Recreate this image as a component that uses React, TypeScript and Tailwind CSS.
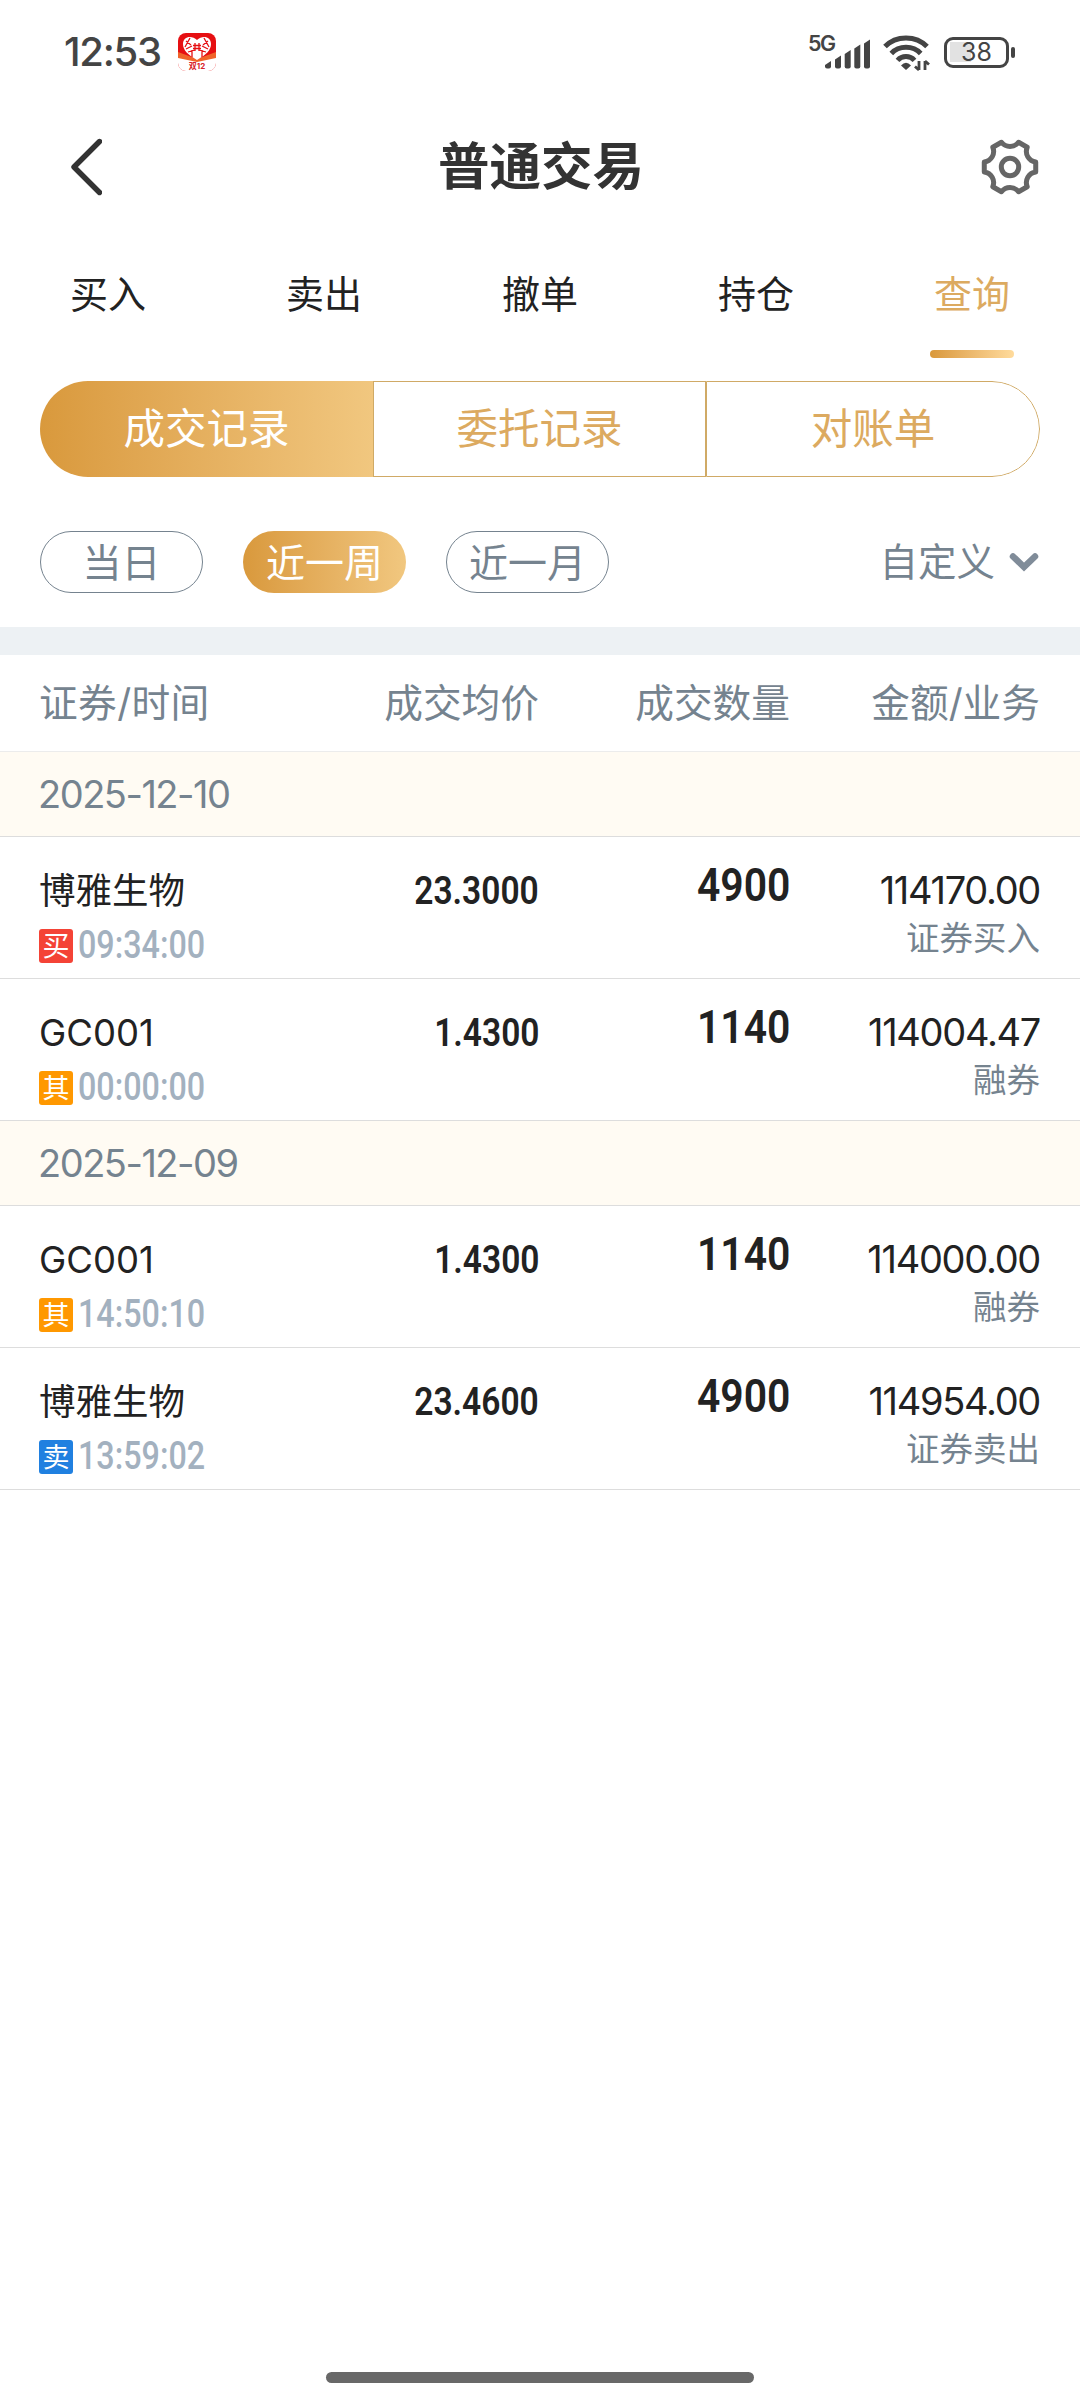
import { clsx } from "clsx";

type Side = "buy" | "sell" | "other";

interface Trade {
  name: string;
  side: Side;
  time: string;
  price: string;
  qty: string;
  amount: string;
  kind: string;
}

const TABS = ["买入", "卖出", "撤单", "持仓", "查询"];
const SEGMENTS = ["成交记录", "委托记录", "对账单"];
const RANGES = ["当日", "近一周", "近一月"];

const DAYS: { date: string; trades: Trade[] }[] = [
  {
    date: "2025-12-10",
    trades: [
      { name: "博雅生物", side: "buy", time: "09:34:00", price: "23.3000", qty: "4900", amount: "114170.00", kind: "证券买入" },
      { name: "GC001", side: "other", time: "00:00:00", price: "1.4300", qty: "1140", amount: "114004.47", kind: "融券" },
    ],
  },
  {
    date: "2025-12-09",
    trades: [
      { name: "GC001", side: "other", time: "14:50:10", price: "1.4300", qty: "1140", amount: "114000.00", kind: "融券" },
      { name: "博雅生物", side: "sell", time: "13:59:02", price: "23.4600", qty: "4900", amount: "114954.00", kind: "证券卖出" },
    ],
  },
];

const BADGES: Record<Side, { label: string; color: string }> = {
  buy: { label: "买", color: "bg-[#f44336]" },
  sell: { label: "卖", color: "bg-[#2080e0]" },
  other: { label: "其", color: "bg-[#ff9800]" },
};

// Six-tooth cog outline around the origin
function cogPath() {
  const at = (deg: number, r: number) => {
    const rad = (deg * Math.PI) / 180;
    return `${(Math.cos(rad) * r).toFixed(2)} ${(Math.sin(rad) * r).toFixed(2)}`;
  };
  let d = `M${at(-11, 26.2)}`;
  for (let a = 0; a < 360; a += 60) {
    d += `L${at(a + 11, 26.2)}C${at(a + 18, 19.6)} ${at(a + 42, 19.6)} ${at(a + 49, 26.2)}`;
  }
  return d + "Z";
}

function StatusBar() {
  return (
    <div className="flex h-[104px] items-center pl-[64px] pr-[65px] text-[#444]">
      <span className="w-[114px] whitespace-nowrap font-['Inter','Noto_Sans_CJK_SC',sans-serif] text-[40px] font-medium leading-[50px] tracking-[-1.300px]">
        12:53
      </span>
      <svg className="h-[38px] w-[38px]" viewBox="0 0 38 38">
        <rect width="38" height="38" rx="8" fill="#e60f12" />
        <path d="M0 19 19 26 38 19V30H0Z" fill="#f0642a" />
        <path d="M0 25 19 29 38 25V30A8 8 0 0 1 30 38H8A8 8 0 0 1 0 30Z" fill="#fff" />
        <path d="M19 27C10 22 5 17 5 11 5 3 14 2 19 7 24 2 33 3 33 11 33 17 28 22 19 27Z" fill="#fff" />
        <path
          d="M8 8l5 4M12 5l-5 9M8 16l6-3M14 17v7M10 19l7-2M30 8l-5 4M26 5l5 9M30 16l-6-3M24 17v7M28 19l-7-2M17 10v8M21 10v8M15 12.500h8M15 15.500h8"
          stroke="#e60f12"
          strokeWidth="1.300"
          fill="none"
        />
        <text x="19" y="36" textAnchor="middle" fontSize="8" fontWeight="700" fill="#d8232a" fontFamily="Inter, 'Noto Sans CJK SC', sans-serif">
          双12
        </text>
      </svg>
      <div className="ml-auto flex items-center">
        <svg className="h-[44px] w-[66px]" viewBox="-2 -4 66 44" fill="#444">
          <text x="0" y="16.500" fontSize="21.500" fontWeight="600" textLength="28" fontFamily="Inter, sans-serif">
            5G
          </text>
          <path d="M17 31l6-4v5.500q0 2-2 2h-2q-2 0-2-2Z" />
          <path d="M27 25.500l6-4v11q0 2-2 2h-2q-2 0-2-2Z" />
          <path d="M36.700 20l6-4v16.500q0 2-2 2h-2q-2 0-2-2Z" />
          <path d="M46.300 14.500l6-4v22q0 2-2 2h-2q-2 0-2-2Z" />
          <path d="M56 9.500l6-4v27q0 2-2 2h-2q-2 0-2-2Z" />
        </svg>
        <svg className="ml-[10px] h-[38px] w-[48px]" viewBox="0 0 48 38" fill="none" stroke="#444" strokeWidth="5">
          <path d="M3 13.500C14 2 34 2 45 13.500" />
          <path d="M9.300 20.500C17 12.300 31 12.300 38.700 20.500" />
          <path d="M15.500 27.300C20 22.300 28 22.300 32.500 27.300" />
          <path d="M19 32.500Q24 27 29 32.500L24 37Z" fill="#444" stroke="none" />
          <path d="M37 28v9M43 28v9M37 37l-4-3.500M43 28l4 3.500" strokeWidth="2.800" />
        </svg>
        <div className="ml-[14px] flex h-[31px] w-[65px] items-center justify-center rounded-[9px] border-[3.500px] border-[#444] bg-[linear-gradient(90deg,transparent_3px,#e2e2e2_3px,#e2e2e2_24px,transparent_24px)] bg-[length:100%_20px] bg-center bg-no-repeat font-['Inter',sans-serif] text-[25px] leading-none">
          38
        </div>
        <div className="ml-[2px] h-[11px] w-[4px] rounded-full bg-[#444]" />
      </div>
    </div>
  );
}

function NavBar() {
  return (
    <header className="flex h-[128px] items-center justify-between px-[40px] pb-[2px]">
      <svg className="h-[60px] w-[62px]" viewBox="0 0 62 60" fill="none">
        <path d="M59.500 4.500 34 30l25.500 25.500" stroke="#333" strokeWidth="5.400" strokeLinecap="round" strokeLinejoin="round" />
      </svg>
      <h1 className="text-[51.500px] font-bold leading-none text-[#333]">普通交易</h1>
      <svg className="h-[60px] w-[60px]" viewBox="-30 -30 60 60" fill="none" stroke="#666">
        <path d={cogPath()} strokeWidth="5" strokeLinejoin="round" />
        <circle r="8.700" strokeWidth="5" />
      </svg>
    </header>
  );
}

function TradeRow({ trade }: { trade: Trade }) {
  const badge = BADGES[trade.side];
  return (
    <div className="grid h-[142px] grid-cols-[250px_250px_251px_250px] border-b border-[#ddd] pl-[39px] text-[#222]">
      <div className="pt-[34px]">
        <div className="h-[40px] whitespace-nowrap text-[36.500px] leading-[40px]">{trade.name}</div>
        <div className="mt-[14px] flex h-[40px] items-center">
          <span className={clsx("mt-[2px] flex h-[34px] w-[34px] items-center justify-center rounded-[3px] text-[27px] leading-none text-white", badge.color)}>
            {badge.label}
          </span>
          <span className="ml-[5px] origin-left scale-x-[0.85] font-['Roboto',sans-serif] text-[38px] font-medium leading-none text-[#a3b1bf]">
            {trade.time}
          </span>
        </div>
      </div>
      <div className="pt-[34px] text-right">
        <span className="inline-block origin-right scale-x-[0.86] font-['Roboto',sans-serif] text-[39px] font-semibold leading-[40px]">
          {trade.price}
        </span>
      </div>
      <div className="pt-[28px] text-right">
        <span className="inline-block origin-right scale-x-[0.87] font-['Roboto',sans-serif] text-[47px] font-semibold leading-[40px]">
          {trade.qty}
        </span>
      </div>
      <div className="pt-[33px] text-right">
        <div className="font-['Inter',sans-serif] text-[38px] leading-[40px] tracking-[-1.300px]">{trade.amount}</div>
        <div className="mt-[8px] text-[33.500px] leading-[40px] text-[#75838f]">{trade.kind}</div>
      </div>
    </div>
  );
}

export default function App() {
  return (
    <div className="flex h-[2400px] w-[1080px] flex-col bg-white font-['Inter','Noto_Sans_CJK_SC',sans-serif]">
      <StatusBar />
      <NavBar />

      {/* Tabs */}
      <nav className="grid h-[126px] grid-cols-5">
        {TABS.map((tab, i) => (
          <div key={tab} className={clsx("flex flex-col items-center pt-[37px] text-[38px]", i === 4 ? "text-[#dcaa60]" : "text-[#222]")}>
            <span className="leading-[50px]">{tab}</span>
            {i === 4 && <span className="mt-[31px] h-[8px] w-[84px] rounded-full bg-linear-to-r from-[#d9983a] to-[#ffdb9c]" />}
          </div>
        ))}
      </nav>

      {/* Record type */}
      <div className="px-[40px] pt-[23px]">
        <div className="grid h-[96px] grid-cols-[333px_333px_334px] overflow-hidden rounded-[48px] text-[41.500px] leading-none">
          {SEGMENTS.map((label, i) => (
            <div
              key={label}
              className={clsx(
                "flex items-center justify-center pt-[2px]",
                i === 0 && "bg-linear-to-r from-[#d9993c] to-[#f1c77f] text-white",
                i === 1 && "border border-[#d0aa66] text-[#dcaa60]",
                i === 2 && "rounded-r-[48px] border border-[#d0aa66] text-[#dcaa60]"
              )}
            >
              {label}
            </div>
          ))}
        </div>
      </div>

      {/* Date range */}
      <div className="flex h-[150px] items-center gap-[40px] px-[40px] pt-[20px] text-[39px] leading-none text-[#75838f]">
        {RANGES.map((label, i) => (
          <div
            key={label}
            className={clsx(
              "flex h-[62px] w-[163px] items-center justify-center rounded-full",
              i === 1 ? "bg-linear-to-r from-[#d9993c] to-[#f1c77f] text-white" : "border border-[#75838f]"
            )}
          >
            {label}
          </div>
        ))}
        <div className="ml-auto flex items-center">
          <span className="text-[38.500px]">自定义</span>
          <svg className="ml-[13px] h-[22px] w-[32px]" viewBox="0 0 32 22" fill="none">
            <path d="M5 5.500 16 16 27 5.500" stroke="#808c99" strokeWidth="6.500" strokeLinecap="round" />
          </svg>
        </div>
      </div>

      <div className="h-[28px] bg-[#edf1f4]" />

      {/* Column titles */}
      <div className="grid h-[97px] grid-cols-[250px_250px_251px_250px] items-center border-b border-[#ececec] pl-[39px] text-right text-[38.700px] leading-none text-[#75838f]">
        <span className="text-left tracking-[0.400px]">证券/时间</span>
        <span>成交均价</span>
        <span>成交数量</span>
        <span>金额/业务</span>
      </div>

      {DAYS.map((day) => (
        <section key={day.date}>
          <div className="flex h-[85px] items-center border-b border-[#ddd] bg-[#fffbf3] px-[38px] text-[38px] leading-none tracking-[-1.500px] text-[#75838f]">
            {day.date}
          </div>
          {day.trades.map((trade) => (
            <TradeRow key={trade.time} trade={trade} />
          ))}
        </section>
      ))}

      {/* Home indicator */}
      <div className="mx-auto mb-[17px] mt-auto h-[11px] w-[428px] rounded-full bg-[#686868]" />
    </div>
  );
}
